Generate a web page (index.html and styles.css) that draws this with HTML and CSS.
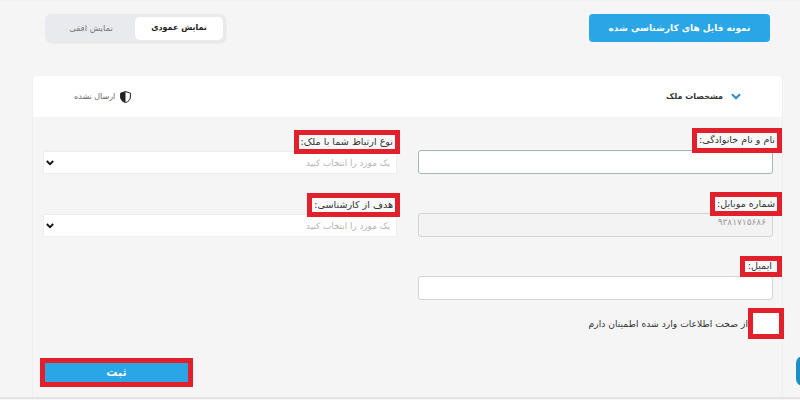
FILE: index.html
```html
<!DOCTYPE html>
<html lang="fa" dir="rtl">
<head>
<meta charset="utf-8">
<title>مشخصات ملک</title>
<link rel="stylesheet" href="styles.css">
</head>
<body>
<div class="toolbar">
  <button class="sample-btn" type="button">نمونه فایل های کارشناسی شده</button>
  <div class="view-toggle">
    <span class="view-opt active">نمایش عمودی</span>
    <span class="view-opt">نمایش افقی</span>
  </div>
</div>
<section class="card">
  <header class="card-head">
    <div class="head-group title-group">
      <svg class="chevron" width="10" height="7" viewBox="0 0 10 7"><path d="M1 1.200 5 5.200 9 1.200" fill="none" stroke="#2b8fd0" stroke-width="2.200"/></svg>
      <span class="head-title">مشخصات ملک</span>
    </div>
    <div class="head-group">
      <svg width="11" height="12" viewBox="0 0 11 12"><path d="M5.500.5 10.400 2.200V6c0 2.800-2 4.700-4.900 5.600C2.600 10.700.6 8.800.6 6V2.200Z" fill="#fff" stroke="#222" stroke-width="1"/><path d="M5.500.5V11.600C2.600 10.700.6 8.800.6 6V2.200Z" fill="#222"/></svg>
      <span class="head-status">ارسال نشده</span>
    </div>
  </header>
  <div class="card-body">
    <div class="form-grid">
      <div class="field">
        <label class="mark-label tall" for="f-name">نام و نام خانوادگی:</label>
        <input class="text-input focus" id="f-name" type="text">
      </div>
      <div class="field side">
        <label class="mark-label" for="f-rel">نوع ارتباط شما با ملک:</label>
        <select class="select-input" id="f-rel"><option>یک مورد را انتخاب کنید</option></select>
      </div>
      <div class="field">
        <label class="mark-label" for="f-mobile">شماره موبایل:</label>
        <input class="text-input locked" id="f-mobile" type="text" value="۹۳۸۱۷۱۵۶۸۶" readonly>
      </div>
      <div class="field side">
        <label class="mark-label" for="f-goal">هدف از کارشناسی:</label>
        <select class="select-input" id="f-goal"><option>یک مورد را انتخاب کنید</option></select>
      </div>
      <div class="field">
        <label class="mark-label short" for="f-email">ایمیل:</label>
        <input class="text-input" id="f-email" type="text">
      </div>
    </div>
    <div class="confirm-row">
      <span class="mark-box"><input class="check" id="f-ok" type="checkbox"></span>
      <label class="confirm-text" for="f-ok">از صحت اطلاعات وارد شده اطمینان دارم</label>
    </div>
    <div class="submit-row">
      <button class="submit-btn" type="button">ثبت</button>
    </div>
  </div>
</section>
<div class="footer-line"></div>
<span class="chat-bubble"></span>
</body>
</html>
```
FILE: styles.css
```css
* { box-sizing: border-box; }
html, body { margin: 0; height: 400px; overflow: hidden; }
body {
  background: #f5f5f5;
  font-family: "DejaVu Sans", "Noto Sans", sans-serif;
  color: #333;
  font-size: 9px;
  position: relative;
  border-top: 1px solid #f1f1f1;
}
.toolbar {
  display: flex;
  justify-content: space-between;
  padding: 13px 30px 0 0;
  margin-left: 45px;
  height: 41px;
  margin-bottom: 34px;
}
.sample-btn {
  width: 181px;
  height: 28px;
  border: 0;
  border-radius: 4px;
  background: #2aa5e6;
  color: #fff;
  font: bold 9px "DejaVu Sans", sans-serif;
}
.view-toggle {
  display: flex;
  align-items: center;
  width: 180px;
  height: 28px;
  padding: 3px 2px;
  border-radius: 6px;
  background: #e8eaed;
  box-shadow: 1px 1px 2px rgba(0,0,0,.08);
}
.view-opt {
  flex: 1;
  height: 23px;
  line-height: 22px;
  text-align: center;
  color: #777;
  font-size: 8.500px;
}
.view-opt.active {
  flex: 0 0 88px;
  background: #fff;
  border-radius: 5px;
  color: #222;
  font-weight: bold;
  font-size: 8px;
}
.card {
  margin: 0 17px 0 32px;
  width: 751px;
  height: 321px;
  border-left: 1px solid #efefef;
  border-right: 1px solid #efefef;
  position: relative;
}
.card-head {
  height: 41px;
  padding: 0 41px;
  display: flex;
  align-items: center;
  justify-content: space-between;
  background: #fff;
  border-radius: 4px 4px 0 0;
}
.head-group { display: flex; align-items: center; gap: 5px; }
.title-group { gap: 8px; }
.head-title { font-size: 8px; color: #333; font-weight: bold; }
.head-status { font-size: 8px; color: #666; }
.card-body { padding: 11px 9px 0 10px; }
.form-grid {
  display: grid;
  grid-template-columns: 355px 354px;
  column-gap: 21px;
  row-gap: 17px;
}
.field {
  height: 46px;
  display: flex;
  flex-direction: column;
  justify-content: flex-end;
  align-items: flex-start;
}
.mark-label {
  display: block;
  margin: 0 -9px -3px 0;
  padding: 0 2px;
  height: 24px;
  line-height: 13px;
  border: 5px solid #e2202c;
  background: #f8f8f8;
  font-size: 9.600px;
  color: #333;
  white-space: nowrap;
  position: relative;
  z-index: 1;
}
.field.side .mark-label { margin-right: -3px; }
.mark-label.tall { height: 25px; line-height: 14px; }
.mark-label.short { padding: 0 5px 0 3px; height: 21px; margin-bottom: -1px; line-height: 10px; }
.text-input {
  width: 100%;
  height: 24px;
  border: 1px solid #d4d4d4;
  border-radius: 3px;
  background: #fff;
  padding: 0 6px;
  font: 9px "DejaVu Sans", sans-serif;
  color: #999;
}
.text-input.focus { border-color: #9fbcaa; }
.text-input.locked { background: #f3f3f3; padding-bottom: 6px; }
.select-input {
  appearance: none;
  width: 100%;
  height: 23px;
  border: 1px solid #eee;
  background: #fff url("data:image/svg+xml,%3Csvg xmlns='http://www.w3.org/2000/svg' width='8' height='6'%3E%3Cpath d='M.8 1 4 4.200 7.200 1' fill='none' stroke='%23111' stroke-width='1.800'/%3E%3C/svg%3E") no-repeat 2px 50%;
  font: 8.800px "DejaVu Sans", sans-serif;
  color: #b5b5b5;
  padding: 0 6px;
}
.confirm-row {
  display: flex;
  align-items: center;
  margin-top: 8px;
  margin-right: -11px;
  height: 31px;
}
.mark-box {
  width: 36px;
  height: 31px;
  border: 5px solid #e2202c;
  background: #f8f8f8;
  display: flex;
}
.check {
  appearance: none;
  margin: 0;
  width: 100%;
  height: 100%;
  background: #fff;
}
.confirm-text { font-size: 9.200px; color: #333; }
.submit-row { display: flex; justify-content: flex-end; margin: 19px 0 0 0; }
.submit-btn {
  width: 153px;
  height: 29px;
  margin-left: -3px;
  border: 5px solid #e2202c;
  background: #2aa5e6;
  color: #fff;
  font: bold 11px "DejaVu Sans", sans-serif;
}
.footer-line { height: 2px; background: #e4e4e4; }
.chat-bubble {
  position: absolute;
  right: -10px;
  top: 355px;
  width: 14px;
  height: 30px;
  border-radius: 7px;
  background: #1b8fc4;
}
```
